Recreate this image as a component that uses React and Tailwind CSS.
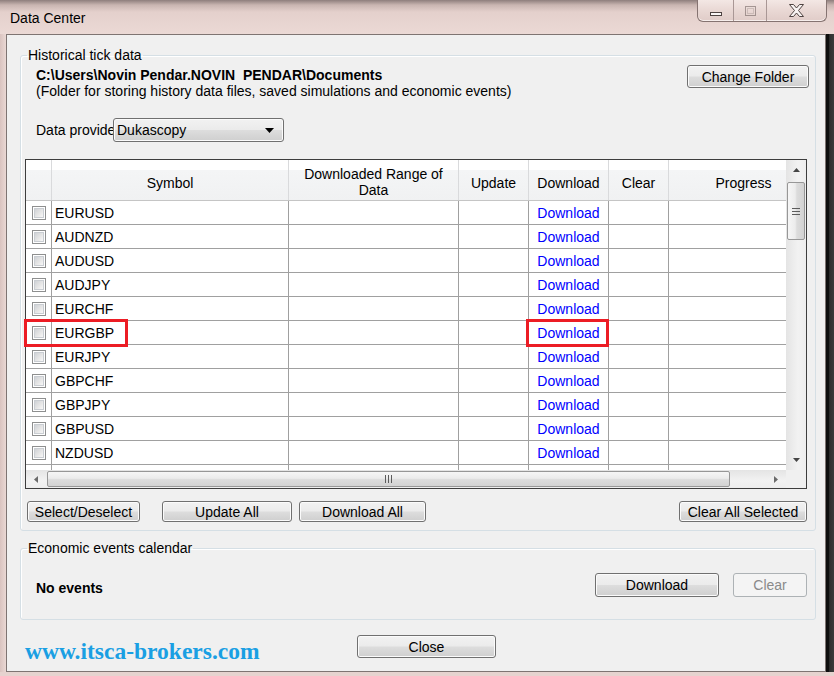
import React from "react";

const symbols = [
  "EURUSD",
  "AUDNZD",
  "AUDUSD",
  "AUDJPY",
  "EURCHF",
  "EURGBP",
  "EURJPY",
  "GBPCHF",
  "GBPJPY",
  "GBPUSD",
  "NZDUSD",
];

const Btn = ({ className = "", disabled, children }) => (
  <div
    className={`flex shrink-0 items-center justify-center rounded-[3px] border leading-[16px] ${
      disabled
        ? "border-[#adb2b5] bg-[#f4f4f4] text-[#8a8a8a]"
        : "border-[#707070] bg-[linear-gradient(#f2f2f2_0%,#ebebeb_48%,#dddddd_52%,#cfcfcf_100%)] text-black shadow-[inset_0_0_0_1px_#fbfbfb]"
    } ${className}`}
  >
    {children}
  </div>
);

const Check = () => (
  <div className="h-[14px] w-[14px] border border-[#8e8f8f] bg-white p-[1px]">
    <div className="h-full w-full border border-[#c9cdd2] bg-[linear-gradient(135deg,#cfd2d6_0%,#e6e6e6_55%,#f7f7f7_100%)]" />
  </div>
);

const Arrow = ({ dir, color = "#454545" }) => {
  const pts = {
    up: "0,4 3.5,0 7,4",
    down: "0,0 7,0 3.5,4",
    left: "4,0 4,7 0,3.5",
    right: "0,0 0,7 4,3.5",
  }[dir];
  const vertical = dir === "up" || dir === "down";
  return (
    <svg width={vertical ? 7 : 4} height={vertical ? 4 : 7}>
      <polygon points={pts} fill={color} />
    </svg>
  );
};

const Grip = ({ vertical }) =>
  vertical ? (
    <svg width="8" height="7">
      <rect x="0" y="0" width="8" height="1" fill="#5c5c5c" />
      <rect x="0" y="3" width="8" height="1" fill="#5c5c5c" />
      <rect x="0" y="6" width="8" height="1" fill="#5c5c5c" />
    </svg>
  ) : (
    <svg width="7" height="8">
      <rect x="0" y="0" width="1" height="8" fill="#5c5c5c" />
      <rect x="3" y="0" width="1" height="8" fill="#5c5c5c" />
      <rect x="6" y="0" width="1" height="8" fill="#5c5c5c" />
    </svg>
  );

const HeadCell = ({ w, children, two }) => (
  <div
    className={`${w} flex shrink-0 flex-col items-center justify-end border-r border-[#d9dadc] text-center leading-[16px] ${
      two ? "pb-[2px]" : "pb-[9px]"
    }`}
  >
    {children}
  </div>
);

// sym empty -> the half hidden row under the last visible one
const Row = ({ sym }) => (
  <div className="flex h-[24px] shrink-0 border-b border-[#a0a0a0] bg-white leading-[16px]">
    <div className="flex w-[26px] shrink-0 items-center justify-center border-r border-[#a0a0a0]">
      {sym && <Check />}
    </div>
    <div className="flex w-[237px] shrink-0 items-center border-r border-[#a0a0a0] pl-[3px]">
      {sym}
    </div>
    <div className="w-[170px] shrink-0 border-r border-[#a0a0a0]" />
    <div className="w-[70px] shrink-0 border-r border-[#a0a0a0]" />
    <div className="flex w-[80px] shrink-0 items-center justify-center border-r border-[#a0a0a0] text-[#0000ff]">
      {sym && "Download"}
    </div>
    <div className="w-[60px] shrink-0 border-r border-[#a0a0a0]" />
    <div className="w-[150px] shrink-0 border-r border-[#a0a0a0]" />
  </div>
);

const CaptionButtons = () => (
  <div className="mr-[7px] ml-auto flex h-[22px] overflow-hidden rounded-b-[6px] border border-t-0 border-[#857371] bg-[linear-gradient(#f3e7e4_0%,#e9d8d4_50%,#e0ccc8_100%)] shadow-[inset_0_-1px_0_#f7eeec]">
    <div className="flex w-[35px] items-end justify-center pb-[5px]">
      <svg width="12" height="4">
        <rect x="0.5" y="0.5" width="11" height="3" fill="#fbf7f6" stroke="#4e4341" />
      </svg>
    </div>
    <div className="flex w-[33px] items-center justify-center border-l border-[#a99795]">
      <svg width="11" height="10" opacity="0.55">
        <rect x="0.5" y="0.5" width="10" height="9" fill="none" stroke="#6b5c5a" />
        <rect x="2.5" y="2.5" width="6" height="5" fill="none" stroke="#b5a6a3" />
      </svg>
    </div>
    <div className="flex w-[60px] items-center justify-center border-l border-[#a99795]">
      <svg width="15" height="13">
        <polygon
          points="0.5,0.5 4.5,0.5 7.5,4 10.5,0.5 14.5,0.5 9.5,6.5 14.5,12.5 10.5,12.5 7.5,9 4.5,12.5 0.5,12.5 5.5,6.5"
          fill="#f8f3f2"
          stroke="#4e4341"
        />
      </svg>
    </div>
  </div>
);

export default function App() {
  return (
    <div className="flex h-[676px] w-[834px] flex-col overflow-hidden bg-[#e9d7d3] font-['Liberation_Sans',Arial,sans-serif] text-[14px] text-black">
      {/* title bar */}
      <div className="relative flex h-[34px] shrink-0 items-start bg-[linear-gradient(180deg,#8e7e7c_0px,#c9b5b1_5px,#e4d0cc_12px,#ebd9d5_100%)]">
        <div className="pt-[10px] pl-[10px] leading-[16px]">Data Center</div>
        <CaptionButtons />
      </div>

      <div className="flex h-[638px] shrink-0">
        <div className="w-[6px] shrink-0 bg-[linear-gradient(90deg,#d9c3bf,#ead8d4)]" />

        {/* client */}
        <div className="flex w-[820px] shrink-0 flex-col border border-[#7e7472] bg-[#f0f0f0] pt-[12px] pl-[13px]">
          <fieldset className="w-[796px] rounded-[3px] border border-[#d5dfe5] pb-[8px] shadow-[inset_1px_1px_0_#ffffff]">
            <legend className="ml-[6px] px-[1px] leading-[16px]">Historical tick data</legend>

            <div className="mt-[2px] flex items-start">
              <div className="pt-[2px] pl-[15px] leading-[16px]">
                <div className="font-bold whitespace-pre">
                  {"C:\\Users\\Novin Pendar.NOVIN  PENDAR\\Documents"}
                </div>
                <div>(Folder for storing history data files, saved simulations and economic events)</div>
              </div>
              <Btn className="mr-[6px] ml-auto h-[23px] w-[122px]">Change Folder</Btn>
            </div>

            <div className="mt-[19px] flex items-center pl-[15px] leading-[16px]">
              <span className="w-[77px] overflow-hidden whitespace-nowrap">Data provider:</span>
              <div className="flex h-[24px] w-[171px] items-center rounded-[3px] border border-[#707070] bg-[linear-gradient(#f2f2f2_0%,#ebebeb_48%,#dddddd_52%,#cfcfcf_100%)] pr-[9px] pl-[3px] shadow-[inset_0_0_0_1px_#fbfbfb]">
                <span>Dukascopy</span>
                <svg className="ml-auto" width="9" height="5">
                  <polygon points="0,0 9,0 4.5,5" fill="#000" />
                </svg>
              </div>
            </div>

            {/* grid */}
            <div className="relative mt-[17px] ml-[4px] flex h-[330px] w-[782px] flex-col border border-[#3d3d3d]">
              <div className="flex h-[310px] shrink-0">
                <div className="flex w-[760px] shrink-0 flex-col overflow-hidden bg-white">
                  <div className="flex h-[41px] shrink-0 border-b border-[#c5c5c5] bg-[linear-gradient(#ffffff_0%,#ffffff_24%,#f4f5f6_26%,#f0f1f2_100%)]">
                    <HeadCell w="w-[26px]" />
                    <HeadCell w="w-[237px]">Symbol</HeadCell>
                    <HeadCell w="w-[170px]" two>
                      <span>Downloaded Range of</span>
                      <span>Data</span>
                    </HeadCell>
                    <HeadCell w="w-[70px]">Update</HeadCell>
                    <HeadCell w="w-[80px]">Download</HeadCell>
                    <HeadCell w="w-[60px]">Clear</HeadCell>
                    <HeadCell w="w-[150px]">Progress</HeadCell>
                  </div>
                  {symbols.map((s) => (
                    <Row key={s} sym={s} />
                  ))}
                  <Row sym="" />
                </div>

                {/* vertical scrollbar */}
                <div className="flex w-[20px] shrink-0 flex-col bg-[linear-gradient(90deg,#e4e4e4,#f2f2f2_60%,#ededed)]">
                  <div className="flex h-[20px] shrink-0 items-center justify-center">
                    <Arrow dir="up" />
                  </div>
                  <div className="mx-[1px] mt-[2px] flex h-[58px] shrink-0 items-center justify-center rounded-[2px] border border-[#979797] bg-[linear-gradient(90deg,#f6f6f6_0%,#ececec_45%,#dcdcdc_55%,#d2d2d2_100%)]">
                    <Grip vertical />
                  </div>
                  <div className="flex-1" />
                  <div className="flex h-[20px] shrink-0 items-center justify-center">
                    <Arrow dir="down" />
                  </div>
                </div>
              </div>

              {/* horizontal scrollbar */}
              <div className="flex h-[18px] shrink-0">
                <div className="flex w-[760px] shrink-0 items-center bg-[linear-gradient(#e4e4e4,#f2f2f2_60%,#ededed)]">
                  <div className="flex w-[20px] shrink-0 justify-center">
                    <Arrow dir="left" color="#6a6a6a" />
                  </div>
                  <div className="ml-[1px] flex h-[16px] w-[683px] shrink-0 items-center justify-center rounded-[2px] border border-[#979797] bg-[linear-gradient(#f6f6f6_0%,#ececec_45%,#dcdcdc_55%,#d2d2d2_100%)]">
                    <Grip />
                  </div>
                  <div className="flex-1" />
                  <div className="flex w-[20px] shrink-0 justify-center">
                    <Arrow dir="right" color="#6a6a6a" />
                  </div>
                </div>
                <div className="w-[20px] shrink-0 bg-[#f0f0f0]" />
              </div>

              {/* highlight marks */}
              <div className="absolute top-[159px] left-[-2px] h-[28px] w-[104px] border-[3px] border-[#ec1c24]" />
              <div className="absolute top-[159px] left-[500px] h-[28px] w-[83px] border-[3px] border-[#ec1c24]" />
            </div>

            <div className="mt-[12px] flex items-center">
              <Btn className="ml-[6px] h-[21px] w-[113px]">Select/Deselect</Btn>
              <Btn className="ml-[22px] h-[21px] w-[130px]">Update All</Btn>
              <Btn className="ml-[7px] h-[21px] w-[127px]">Download All</Btn>
              <Btn className="mr-[8px] ml-auto h-[21px] w-[128px]">Clear All Selected</Btn>
            </div>
          </fieldset>

          <fieldset className="mt-[9px] w-[796px] rounded-[3px] border border-[#d5dfe5] pb-[22px] shadow-[inset_1px_1px_0_#ffffff]">
            <legend className="ml-[6px] px-[1px] leading-[16px]">Economic events calendar</legend>
            <div className="mt-[17px] flex items-center">
              <span className="pt-[6px] pl-[15px] leading-[16px] font-bold">No events</span>
              <Btn className="ml-auto h-[24px] w-[124px]">Download</Btn>
              <Btn className="mr-[8px] ml-[14px] h-[24px] w-[74px]" disabled>
                Clear
              </Btn>
            </div>
          </fieldset>

          <div className="mt-[15px] flex items-start">
            <div className="mt-[2px] ml-[5px] w-[332px] shrink-0 font-['Liberation_Serif','Times_New_Roman',serif] text-[23.5px] leading-[28px] font-bold text-[#1a9fe3]">
              www.itsca-brokers.com
            </div>
            <Btn className="h-[23px] w-[139px]">Close</Btn>
          </div>
        </div>

        <div className="w-[8px] shrink-0 bg-[linear-gradient(90deg,#0e0e0e_0%,#0e0e0e_35%,#2f2f2f_45%,#3b3b3b_100%)]" />
      </div>

      <div className="h-[4px] shrink-0 bg-[#e6d3cf]" />
    </div>
  );
}
